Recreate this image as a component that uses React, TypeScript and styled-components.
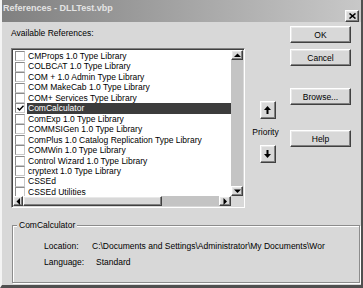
import styled, { createGlobalStyle } from 'styled-components';

const Global = createGlobalStyle`
  html, body { margin: 0; padding: 0; background: #d8d8d8; }
  body { font-family: "Liberation Sans", Arial, sans-serif; font-size: 8.5px; color: #000; }
`;

const raised = `
  border: 1px solid;
  border-color: #ffffff #404040 #404040 #ffffff;
  box-shadow: inset -1px -1px 0 #808080, inset 1px 1px 0 #e8e8e8;
`;

const Window = styled.div`
  width: 363px;
  height: 288px;
  box-sizing: border-box;
  background: #d8d8d8;
  border-left: 2px solid #f4f4f4;
  border-right: 2px solid #505050;
  border-bottom: 3px solid #505050;
  display: flex;
  flex-direction: column;
  overflow: hidden;
`;

const TitleBar = styled.div`
  height: 22px;
  flex-shrink: 0;
  display: flex;
  align-items: flex-start;
  justify-content: space-between;
  padding: 0 2px 0 1px;
  background: linear-gradient(to right, #808080, #c8c8c8);
`;

const Title = styled.span`
  font-weight: bold;
  font-size: 9px;
  color: #e4e4e4;
  line-height: 16px;
`;

const CloseButton = styled.div`
  width: 12px;
  height: 10px;
  margin-top: 10px;
  background: #d8d8d8;
  ${raised}
  display: flex;
  align-items: center;
  justify-content: center;
`;

const Body = styled.div`
  display: grid;
  grid-template-columns: 234px 45px 61px;
  padding: 2px 0 0 9px;
`;

const LeftCol = styled.div`
  display: flex;
  flex-direction: column;
`;

const Label = styled.div`
  height: 24px;
  line-height: 14px;
  padding-top: 2px;
  box-sizing: border-box;
`;

const ListBox = styled.div`
  width: 234px;
  height: 160px;
  box-sizing: border-box;
  border: 1px solid;
  border-color: #808080 #ffffff #ffffff #808080;
  box-shadow: inset 1px 1px 0 #404040, inset -1px -1px 0 #d8d8d8;
  padding: 1px;
  display: grid;
  grid-template-columns: 218px 12px;
  grid-template-rows: 146px 10px;
  background: #fff;
`;

const Rows = styled.div`
  overflow: hidden;
  padding-top: 1px;
`;

const Row = styled.div`
  height: 10.46px;
  display: flex;
  align-items: center;
  white-space: nowrap;
`;

const Check = styled.div`
  width: 8px;
  height: 8px;
  margin: 0 2px 0 2px;
  border: 1px solid;
  border-color: #8a8a8a #c8c8c8 #c8c8c8 #8a8a8a;
  background: #fff;
  flex-shrink: 0;
  display: flex;
  align-items: center;
  justify-content: center;
`;

const ItemText = styled.span<{ $selected?: boolean }>`
  flex: 1;
  height: 100%;
  line-height: 10.46px;
  padding-left: 1px;
  background: ${p => (p.$selected ? '#3c3c3c' : 'transparent')};
  color: ${p => (p.$selected ? '#ffffff' : '#000000')};
`;

const VScroll = styled.div`
  display: flex;
  flex-direction: column;
  background: #c4c4c4;
`;

const HScroll = styled.div`
  display: flex;
  background: #c4c4c4;
`;

const ArrowBtn = styled.div<{ $w: number; $h: number }>`
  width: ${p => p.$w}px;
  height: ${p => p.$h}px;
  box-sizing: border-box;
  flex-shrink: 0;
  background: #d8d8d8;
  ${raised}
  display: flex;
  align-items: center;
  justify-content: center;
`;

const Thumb = styled.div<{ $w: number }>`
  width: ${p => p.$w}px;
  height: 10px;
  box-sizing: border-box;
  background: #d8d8d8;
  ${raised}
`;

const Track = styled.div`
  flex: 1;
`;

const Corner = styled.div`
  background: #d8d8d8;
`;

const MidCol = styled.div`
  display: flex;
  flex-direction: column;
  align-items: center;
  padding-top: 77px;
`;

const PriorityBtn = styled.div`
  width: 16px;
  height: 18px;
  box-sizing: border-box;
  background: #d8d8d8;
  ${raised}
  display: flex;
  align-items: center;
  justify-content: center;
`;

const PriorityLabel = styled.div`
  height: 26px;
  line-height: 26px;
  margin-left: -4px;
`;

const RightCol = styled.div`
  display: flex;
  flex-direction: column;
  padding-top: 2px;
`;

const Button = styled.div<{ $gap: number }>`
  width: 61px;
  height: 17px;
  box-sizing: border-box;
  margin-top: ${p => p.$gap}px;
  background: #d8d8d8;
  ${raised}
  display: flex;
  align-items: center;
  justify-content: center;
`;

const Group = styled.div`
  position: relative;
  margin: 17px 1px 0 10px;
  padding: 12px 0 0 31px;
  height: 58px;
  box-sizing: border-box;
  border: 1px solid #8c8c8c;
  box-shadow: 1px 1px 0 #ffffff, inset 1px 1px 0 #ffffff;
`;

const Legend = styled.span`
  position: absolute;
  top: -6px;
  left: 4px;
  padding: 0 2px;
  line-height: 10px;
  background: #d8d8d8;
`;

const InfoRow = styled.div`
  display: flex;
  height: 16px;
  align-items: center;
  white-space: nowrap;
`;

const InfoLabel = styled.span<{ $w: number }>`
  width: ${p => p.$w}px;
  flex-shrink: 0;
`;

const Tri = ({ dir }: { dir: 'up' | 'down' | 'left' | 'right' }) => {
  const pts = {
    up: '0,4 3.5,0.5 7,4',
    down: '0,0.5 7,0.5 3.5,4',
    left: '4,0 4,7 0.5,3.5',
    right: '0.5,0 0.5,7 4,3.5',
  }[dir];
  const vert = dir === 'up' || dir === 'down';
  return (
    <svg width={vert ? 7 : 5} height={vert ? 5 : 7} viewBox={vert ? '0 0 7 5' : '0 0 5 7'}>
      <polygon points={pts} fill="#000" />
    </svg>
  );
};

const BigArrow = ({ down }: { down?: boolean }) => (
  <svg width="7" height="8" viewBox="0 0 7 8" style={down ? { transform: 'rotate(180deg)' } : undefined}>
    <polygon points="3.5,0 7,4 4.5,4 4.5,8 2.5,8 2.5,4 0,4" fill="#000" />
  </svg>
);

const items = [
  'CMProps 1.0 Type Library',
  'COLBCAT 1.0 Type Library',
  'COM + 1.0 Admin Type Library',
  'COM MakeCab 1.0 Type Library',
  'COM+ Services Type Library',
  'ComCalculator',
  'ComExp 1.0 Type Library',
  'COMMSIGen 1.0 Type Library',
  'ComPlus 1.0 Catalog Replication Type Library',
  'COMWin 1.0 Type Library',
  'Control Wizard 1.0 Type Library',
  'cryptext 1.0 Type Library',
  'CSSEd',
  'CSSEd Utilities',
];

export default function App() {
  return (
    <>
      <Global />
      <Window>
        <TitleBar>
          <Title>References - DLLTest.vbp</Title>
          <CloseButton>
            <svg width="7" height="6" viewBox="0 0 7 6">
              <path d="M0.5 0.5 L6.5 5.5 M6.5 0.5 L0.5 5.5" stroke="#000" strokeWidth="1.6" />
            </svg>
          </CloseButton>
        </TitleBar>
        <Body>
          <LeftCol>
            <Label>Available References:</Label>
            <ListBox>
              <Rows>
                {items.map(name => {
                  const sel = name === 'ComCalculator';
                  return (
                    <Row key={name}>
                      <Check>
                        {sel && (
                          <svg width="7" height="6" viewBox="0 0 7 6">
                            <path d="M0.5 3 L2.5 5 L6.5 0.8" stroke="#000" strokeWidth="1.4" fill="none" />
                          </svg>
                        )}
                      </Check>
                      <ItemText $selected={sel}>{name}</ItemText>
                    </Row>
                  );
                })}
              </Rows>
              <VScroll>
                <ArrowBtn $w={12} $h={10}><Tri dir="up" /></ArrowBtn>
                <Track />
                <ArrowBtn $w={12} $h={10}><Tri dir="down" /></ArrowBtn>
              </VScroll>
              <HScroll>
                <ArrowBtn $w={10} $h={10}><Tri dir="left" /></ArrowBtn>
                <Thumb $w={139} />
                <Track />
                <ArrowBtn $w={12} $h={10}><Tri dir="right" /></ArrowBtn>
              </HScroll>
              <Corner />
            </ListBox>
          </LeftCol>
          <MidCol>
            <PriorityBtn><BigArrow /></PriorityBtn>
            <PriorityLabel>Priority</PriorityLabel>
            <PriorityBtn><BigArrow down /></PriorityBtn>
          </MidCol>
          <RightCol>
            <Button $gap={0}>OK</Button>
            <Button $gap={6}>Cancel</Button>
            <Button $gap={22}>Browse...</Button>
            <Button $gap={25}>Help</Button>
          </RightCol>
        </Body>
        <Group>
          <Legend>ComCalculator</Legend>
          <InfoRow>
            <InfoLabel $w={48}>Location:</InfoLabel>
            <span>C:\Documents and Settings\Administrator\My Documents\Wor</span>
          </InfoRow>
          <InfoRow>
            <InfoLabel $w={52}>Language:</InfoLabel>
            <span>Standard</span>
          </InfoRow>
        </Group>
      </Window>
    </>
  );
}
